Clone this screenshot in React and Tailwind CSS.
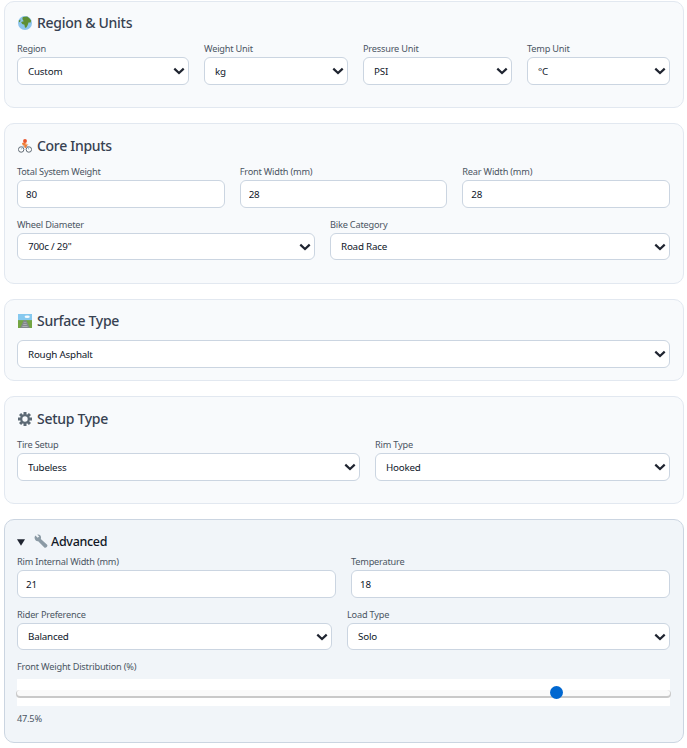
import React from "react";

const F = "[font-family:'Noto_Sans',sans-serif]";
const IC = "w-[14px] h-[14px] ml-[1px] shrink-0";

function Globe() {
  return (
    <svg viewBox="0 0 16 16" className={IC}>
      <circle cx="8" cy="8" r="8" fill="#8cc4ec" />
      <path d="M5.5 1 L10.5 .5 L13 2.5 L15 5 L14.5 7.5 L12 7.5 L11 10.5 L9.5 13 L8 13.5 L7.3 10 L4.8 9 L3.5 6.8 L6.5 6 L5 3.5 Z" fill="#5f8f33" />
      <path d="M1 5 L3 4 L2.5 6.5 L1 7 Z" fill="#5f8f33" />
    </svg>
  );
}
function Rider() {
  return (
    <svg viewBox="0 0 16 16" className={IC}>
      <circle cx="3.6" cy="12" r="3.1" fill="#fff" stroke="#5b6670" strokeWidth="1.1" />
      <circle cx="12.4" cy="12" r="3.1" fill="#fff" stroke="#5b6670" strokeWidth="1.1" />
      <path d="M3.6 12 L6 8 L11 8.5 L12.4 12" fill="none" stroke="#7ea7c4" strokeWidth=".9" />
      <path d="M4.5 4.5 L8 3.8 L10.5 7.2 L9 10.5 L7 9.5 L7.5 7.5 L5.5 7.5 Z" fill="#f07f38" />
      <path d="M8.5 4.5 L12 6.5 L11.2 7.5 L8 6 Z" fill="#f4b183" />
      <circle cx="8" cy="2.3" r="2.2" fill="#e9562d" />
    </svg>
  );
}
function Road() {
  return (
    <svg viewBox="0 0 16 16" className={IC}>
      <rect width="16" height="16" fill="#86c9ef" />
      <ellipse cx="10.5" cy="3.2" rx="3" ry="1.4" fill="#f6fbfe" />
      <rect y="7" width="16" height="9" fill="#74a543" />
      <path d="M6.5 7 L9.5 7 L13.5 16 L2.5 16 Z" fill="#83888c" />
      <path d="M6.5 9h3v.8h-3zM6 11.4h4v.8h-4zM5 13.8h6v.8H5z" fill="#b9bcbe" />
    </svg>
  );
}
function Gear() {
  return (
    <svg viewBox="0 0 16 16" className={IC}>
      <g fill="#5d6a75">
        {[0, 45, 90, 135, 180, 225, 270, 315].map((a) => (
          <rect key={a} x="6.3" y="0" width="3.4" height="4" transform={`rotate(${a} 8 8)`} />
        ))}
      </g>
      <circle cx="8" cy="8" r="4.3" fill="none" stroke="#5d6a75" strokeWidth="2.5" />
    </svg>
  );
}
function Wrench() {
  return (
    <svg viewBox="0 0 16 16" className="w-[14px] h-[15px] shrink-0 -mt-[1px]">
      <path d="M1.6 1.2 L4.2 3.8 L6 2.4 L3.8 0.2 C6.2 -0.4 8.4 1.4 8 4 L7.8 5 L15 11.6 C16.4 13.2 13.4 16.4 11.8 14.8 L4.8 7.6 C2.4 8 0 5.4 .8 2.6 Z" fill="#8b9aa5" />
    </svg>
  );
}

function Chevron() {
  return (
    <svg viewBox="0 0 12 8" className="absolute right-[4px] top-[10px] w-[12px] h-[8px] pointer-events-none">
      <path d="M1.3 1.6 L6 6 L10.7 1.6" fill="none" stroke="#1f2430" strokeWidth="2.2" />
    </svg>
  );
}

function Sel({ value, h = "h-[28px]" }) {
  return (
    <div className={`relative ${h}`}>
      <select
        defaultValue={value}
        className={`block appearance-none w-full h-full bg-white border border-[#cbd5e1] rounded-[6px] pl-[10px] pt-[2px] text-[9.8px] tracking-[-0.2px] text-[#0f172a] outline-none ${F}`}
      >
        <option>{value}</option>
      </select>
      <Chevron />
    </div>
  );
}
function Inp({ value }) {
  return (
    <input
      defaultValue={value}
      type="text"
      className={`block w-full h-[28px] bg-white border border-[#cbd5e1] rounded-[6px] pl-[8px] text-[9.8px] tracking-[-0.2px] text-[#0f172a] outline-none ${F}`}
    />
  );
}
function Lab({ children }) {
  return <div className="text-[9.2px] tracking-[-0.2px] leading-[13px] h-[13px] mb-[2px] text-[#4b5563] whitespace-nowrap">{children}</div>;
}
function Field({ label, children }) {
  return (
    <div className="min-w-0">
      <Lab>{label}</Lab>
      {children}
    </div>
  );
}
function Title({ icon, children }) {
  return (
    <div className="flex items-center gap-[5px] h-[18px] mb-[10px] text-[14px] tracking-[-0.3px] font-medium text-[#374151]">
      {icon}
      <span className="pb-[2px]">{children}</span>
    </div>
  );
}
function Card({ children, className = "" }) {
  return <section className={`bg-[#f8fafc] border border-[#e2e8f0] rounded-[10px] pl-[12px] pr-[13px] ${className}`}>{children}</section>;
}

export default function App() {
  return (
    <div className={`w-[687px] h-[748px] overflow-hidden bg-white pl-[4px] pr-[3px] pt-[1px] flex flex-col gap-[15px] ${F}`}>
      <Card className="h-[107px] pt-[12px]">
        <Title icon={<Globe />}>Region &amp; Units</Title>
        <div className="grid grid-cols-[172px_144px_149px_143px] gap-x-[15px]">
          <Field label="Region"><Sel value="Custom" /></Field>
          <Field label="Weight Unit"><Sel value="kg" /></Field>
          <Field label="Pressure Unit"><Sel value="PSI" /></Field>
          <Field label="Temp Unit"><Sel value="°C" /></Field>
        </div>
      </Card>

      <Card className="h-[161px] pt-[13px]">
        <Title icon={<Rider />}>Core Inputs</Title>
        <div className="grid grid-cols-3 gap-x-[15px]">
          <Field label="Total System Weight"><Inp value="80" /></Field>
          <Field label="Front Width (mm)"><Inp value="28" /></Field>
          <Field label="Rear Width (mm)"><Inp value="28" /></Field>
        </div>
        <div className="grid grid-cols-[298px_340px] gap-x-[15px] mt-[10px]">
          <Field label="Wheel Diameter"><Sel h="h-[27px]" value={'700c / 29"'} /></Field>
          <Field label="Bike Category"><Sel h="h-[27px]" value="Road Race" /></Field>
        </div>
      </Card>

      <Card className="h-[82px] pt-[12px]">
        <Title icon={<Road />}>Surface Type</Title>
        <Sel value="Rough Asphalt" />
      </Card>

      <Card className="h-[108px] pt-[13px]">
        <Title icon={<Gear />}>Setup Type</Title>
        <div className="grid grid-cols-[343px_295px] gap-x-[15px]">
          <Field label="Tire Setup"><Sel value="Tubeless" /></Field>
          <Field label="Rim Type"><Sel value="Hooked" /></Field>
        </div>
      </Card>

      <section className="h-[224px] bg-[#f1f5f9] border border-[#cbd5e1] rounded-[10px] pl-[12px] pr-[13px] pt-[13px]">
        <div className="flex items-center h-[18px] mb-[4px] text-[12.5px] tracking-[-0.3px] font-medium text-[#111827]">
          <svg viewBox="0 0 10 8" className="w-[8px] h-[7px] mr-[9px] shrink-0"><path d="M0 0 H10 L5 8 Z" fill="#1f2430" /></svg>
          <Wrench />
          <span className="ml-[3px]">Advanced</span>
        </div>
        <div className="grid grid-cols-2 gap-x-[15px]">
          <Field label="Rim Internal Width (mm)"><Inp value="21" /></Field>
          <Field label="Temperature"><Inp value="18" /></Field>
        </div>
        <div className="grid grid-cols-[315px_323px] gap-x-[15px] mt-[10px]">
          <Field label="Rider Preference"><Sel h="h-[27px]" value="Balanced" /></Field>
          <Field label="Load Type"><Sel h="h-[27px]" value="Solo" /></Field>
        </div>
        <div className="mt-[10px]">
          <Lab>Front Weight Distribution (%)</Lab>
          <input
            type="range"
            min="35"
            max="50"
            step="0.5"
            defaultValue="47.5"
            className="block w-full h-[27px] mt-[6px] bg-white appearance-none outline-none cursor-pointer [&::-webkit-slider-runnable-track]:h-[6px] [&::-webkit-slider-runnable-track]:rounded-[3px] [&::-webkit-slider-runnable-track]:bg-[#fafafa] [&::-webkit-slider-runnable-track]:shadow-[0_1px_0_1px_#c9c9c9] [&::-webkit-slider-thumb]:appearance-none [&::-webkit-slider-thumb]:w-[13px] [&::-webkit-slider-thumb]:h-[13px] [&::-webkit-slider-thumb]:mt-[-3.5px] [&::-webkit-slider-thumb]:rounded-full [&::-webkit-slider-thumb]:bg-[#0067d0]"
          />
          <div className="text-[9.2px] tracking-[-0.2px] leading-[13px] mt-[6px] text-[#4b5563]">47.5%</div>
        </div>
      </section>
    </div>
  );
}
